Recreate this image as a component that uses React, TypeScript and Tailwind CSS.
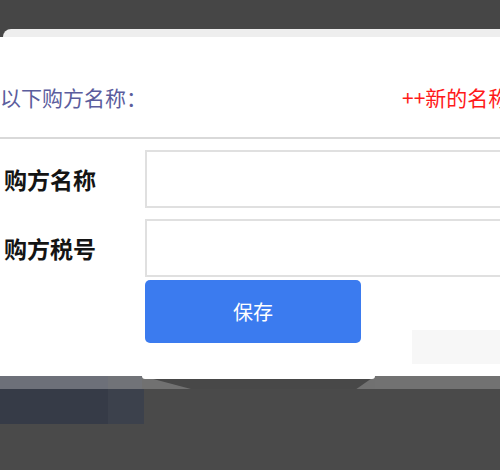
export default function App() {
  const font = { fontFamily: '"Noto Sans CJK SC", "Noto Sans", sans-serif' };
  return (
    <div
      className="flex h-[470px] w-[500px] flex-col overflow-hidden bg-[#4a4a4a]"
      style={font}
    >
      {/* overlay above the sheet */}
      <div className="h-[29px] shrink-0 bg-[#464646]" />

      {/* sheet */}
      <div className="flex h-[347px] shrink-0 flex-col bg-white">
        <div className="bg-[#464646]">
          <div className="ml-[3px] h-[8px] rounded-tl-[12px] bg-[#eeeeee]" />
        </div>

        {/* header */}
        <div className="flex h-[102px] items-start border-b-2 border-[#d9d9d9] pt-[46px]">
          <span className="flex-1 text-[21px] leading-[28px] text-[#5b5d9d]">以下购方名称：</span>
          <span className="w-[98px] overflow-hidden whitespace-nowrap text-[21px] leading-[28px] text-[#ff1a1a]">
            ++新的名称
          </span>
        </div>

        {/* form */}
        <div className="mt-[11px] flex flex-col gap-[11px]">
          <div className="flex h-[58px] items-center">
            <label className="w-[145px] shrink-0 pl-[4px] text-[23px] font-bold text-[#141414]">购方名称</label>
            <input className="h-full w-[380px] shrink-0 border-2 border-[#e0e0e0] bg-white outline-none" />
          </div>
          <div className="flex h-[58px] items-center">
            <label className="w-[145px] shrink-0 pl-[4px] text-[23px] font-bold text-[#141414]">购方税号</label>
            <input className="h-full w-[380px] shrink-0 border-2 border-[#e0e0e0] bg-white outline-none" />
          </div>
        </div>

        <div className="mt-[3px] flex items-start">
          <button className="ml-[145px] h-[63px] w-[216px] rounded-[5px] bg-[#3b7bef] text-[20px] text-white">
            保存
          </button>
          <div className="ml-auto mt-[50px] h-[34px] w-[88px] bg-[#f7f7f7]" />
        </div>
      </div>

      {/* what shows under the sheet */}
      <div className="flex h-[13px] shrink-0">
        <div className="w-[108px] bg-[#6d7079]" />
        <div className="w-[34px] bg-[#717378]" />
        <div className="relative w-[233px] bg-[#717171]">
          <div className="h-full bg-[#484848] [clip-path:polygon(0_0,100%_0,92%_100%,21%_100%)]" />
          <div className="absolute left-0 right-0 top-0 h-[3px] rounded-b-[6px] bg-white" />
        </div>
        <div className="flex-1 bg-[#727272]" />
      </div>
      <div className="flex h-[35px] shrink-0">
        <div className="w-[108px] bg-[#363b47]" />
        <div className="w-[36px] bg-[#3c414c]" />
        <div className="flex-1 bg-[#4a4a4a]" />
      </div>
      <div className="flex-1 bg-[#4a4a4a]" />
    </div>
  );
}
